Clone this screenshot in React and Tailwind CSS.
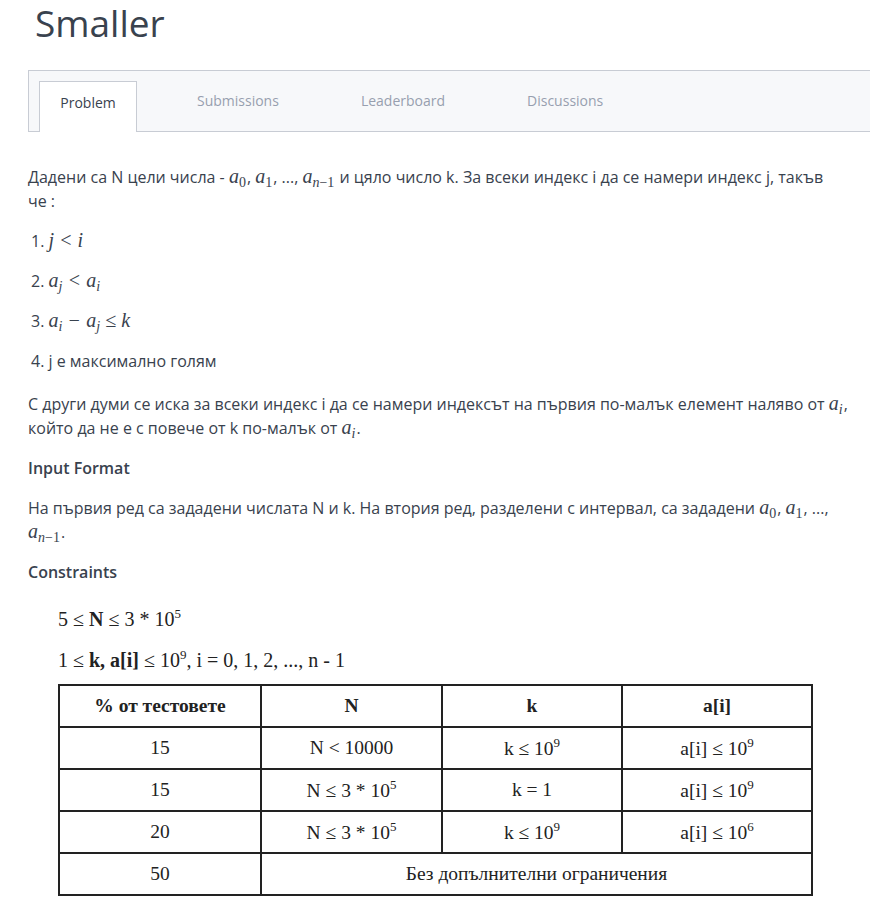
import React from "react";

const M = ({ children }) => (
  <span className="font-['Liberation_Serif',serif] italic text-[20px] leading-none mr-px">{children}</span>
);

// a with subscript, KaTeX-ish
const Ai = ({ s, up }) => (
  <M>
    a
    <span className={`text-[14px] align-[-4px] ${up ? "not-italic" : ""}`}>{s}</span>
  </M>
);

const Sup = ({ children }) => <span className="text-[13px] align-[8px] leading-none">{children}</span>;

const rows = [
  ["15", "N < 10000", null, "k ≤ 10", "9", "a[i] ≤ 10", "9"],
  ["15", "N ≤ 3 * 10", "5", "k = 1", null, "a[i] ≤ 10", "9"],
  ["20", "N ≤ 3 * 10", "5", "k ≤ 10", "9", "a[i] ≤ 10", "6"],
];

const AnMinus1 = () => (
  <Ai
    s={
      <span>
        n<span className="not-italic">−1</span>
      </span>
    }
  />
);

export default function App() {
  return (
    <div className="min-h-[900px] bg-white font-['Open_Sans',sans-serif] text-[#39424e]">
      <h1 className="pl-[35px] pt-[1px] text-[37px] leading-[43px] text-[#39424e]">Smaller</h1>

      {/* tabs */}
      <div className="ml-[28px] mt-[26px] h-[62px] border border-r-0 border-[#c8ccd4] bg-[#f7f8fa] flex items-end pl-[10px]">
        <div className="w-[98px] h-[51px] -mb-px bg-white border border-b-0 border-[#c8ccd4] flex justify-center pt-[10px] text-[14px] text-[#39424e]">
          Problem
        </div>
        <div className="h-[51px] flex pt-[10px] text-[14px] text-[#979faf]">
          <span className="ml-[60px]">Submissions</span>
          <span className="ml-[82px]">Leaderboard</span>
          <span className="ml-[82px]">Discussions</span>
        </div>
      </div>

      <div className="pl-[28px] pr-[20px] pt-[34px] text-[16px] leading-[22px]">
        <p>
          Дадени са N цели числа - <Ai s="0" up />, <Ai s="1" up />, ..., <AnMinus1 /> и цяло число k. За всеки индекс i да се намери индекс j, такъв че&nbsp;:
        </p>

        <div className="mt-[18px] pl-[3px] flex flex-col gap-[16px]">
          <p className="h-[24px]">1. <M>j &lt; i</M></p>
          <p className="h-[24px]">2. <Ai s="j" /> <M>&lt;</M> <Ai s="i" /></p>
          <p className="h-[24px]">3. <Ai s="i" /> <M>−</M> <Ai s="j" /> <M>≤ k</M></p>
          <p className="h-[24px]">4. j е максимално голям</p>
        </div>

        <p className="mt-[19px]">
          С други думи се иска за всеки индекс i да се намери индексът на първия по-малък елемент наляво от <Ai s="i" />, който да не е с повече от k по-малък от <Ai s="i" />.
        </p>

        <h4 className="mt-[16px] font-semibold">Input Format</h4>

        <p className="mt-[18px]">
          На първия ред са зададени числата N и k. На втория ред, разделени с интервал, са зададени <Ai s="0" up />, <Ai s="1" up />, ..., <AnMinus1 />.
        </p>

        <h4 className="mt-[16px] font-semibold">Constraints</h4>

        <div className="mt-[24px] pl-[30px] font-['Liberation_Serif',serif] text-[20px] text-[#222] leading-[24px]">
          <p>
            5 ≤ <b>N</b> ≤ 3 * 10<Sup>5</Sup>
          </p>
          <p className="mt-[17px]">
            1 ≤ <b>k, a[i]</b> ≤ 10<Sup>9</Sup>, i = 0, 1, 2, ..., n - 1
          </p>

          <table className="mt-[12px] border-collapse border-2 border-[#222] text-[19.5px] text-center">
            <colgroup>
              <col className="w-[202px]" />
              <col className="w-[181px]" />
              <col className="w-[180px]" />
              <col className="w-[190px]" />
            </colgroup>
            <thead>
              <tr className="h-[42px]">
                <th className="border-2 border-[#222] font-bold">% от тестовете</th>
                <th className="border-2 border-[#222] font-bold">N</th>
                <th className="border-2 border-[#222] font-bold">k</th>
                <th className="border-2 border-[#222] font-bold">a[i]</th>
              </tr>
            </thead>
            <tbody>
              {rows.map((r, i) => (
                <tr key={i} className="h-[42px]">
                  <td className="border-2 border-[#222]">{r[0]}</td>
                  <td className="border-2 border-[#222]">
                    {r[1]}
                    {r[2] && <Sup>{r[2]}</Sup>}
                  </td>
                  <td className="border-2 border-[#222]">
                    {r[3]}
                    {r[4] && <Sup>{r[4]}</Sup>}
                  </td>
                  <td className="border-2 border-[#222]">
                    {r[5]}
                    <Sup>{r[6]}</Sup>
                  </td>
                </tr>
              ))}
              <tr className="h-[42px]">
                <td className="border-2 border-[#222]">50</td>
                <td colSpan={3} className="border-2 border-[#222]">Без допълнителни ограничения</td>
              </tr>
            </tbody>
          </table>
        </div>
      </div>
    </div>
  );
}
